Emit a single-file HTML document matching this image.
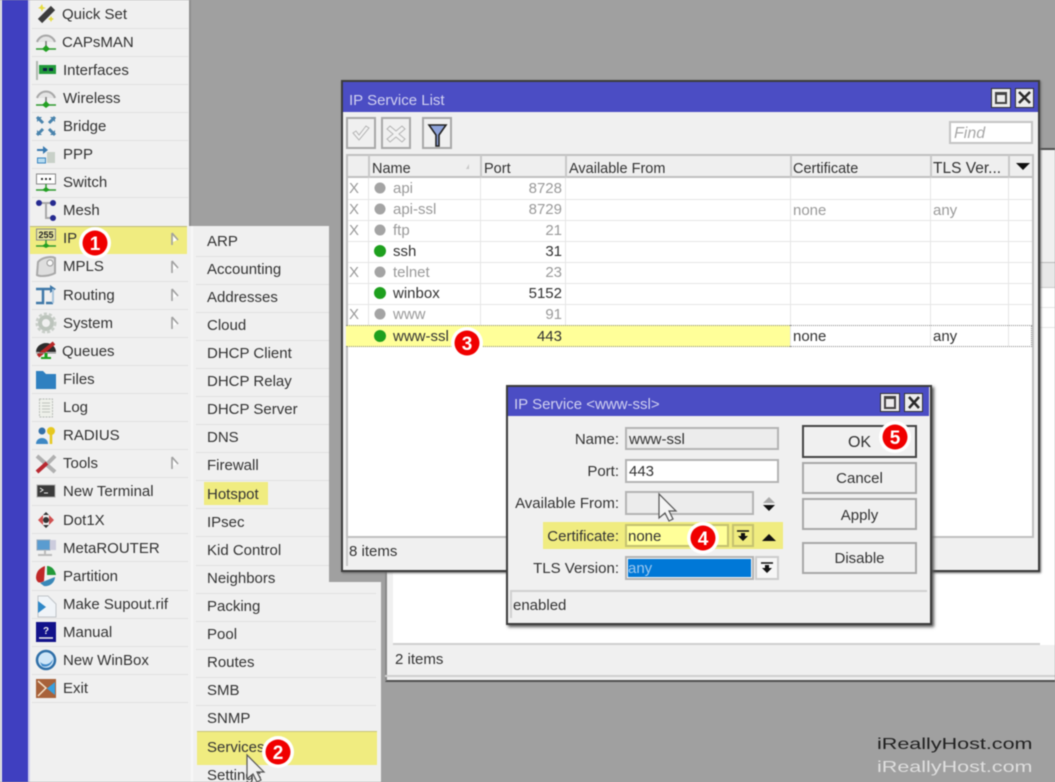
<!DOCTYPE html>
<html><head><meta charset="utf-8"><title>IP Service List</title>
<style>
html,body{margin:0;padding:0;background:#a0a0a0}
#r{position:relative;width:1055px;height:782px;overflow:hidden;background:#a0a0a0;font-family:"Liberation Sans",sans-serif;font-size:15px;color:#333;filter:blur(.55px)}
#r div{position:absolute;box-sizing:border-box}
.t{height:20px;line-height:20px;white-space:nowrap;margin-top:.5px}
.h{margin-top:1.5px;font-size:14.500px}
.g{color:#9a9a9a}
.sep{height:1px;background:#e0e0e0}
.w{background:#f0f0f0}
.bar{background:#4b4dc4;color:#d8d8f4}
.btn{background:#f0f0f0;border:2px solid #a8a8a8;text-align:center;line-height:30px}
.inp{border:2px solid #b4b4b4}
svg{position:absolute;left:0;top:0}
.rl{height:1px;background:#e6e6e6}
.cl{width:1px;background:#e6e6e6}
</style></head><body><div id="r">
<!-- left strip & main menu -->
<div style="left:0;top:0;width:2px;height:782px;background:#e8e8e8"></div>
<div style="left:2px;top:0;width:27px;height:782px;background:#3f3fc0"></div>
<div style="left:28px;top:0;width:2px;height:782px;background:#cfcff0"></div>
<div class="w" style="left:30px;top:0;width:161px;height:782px"></div>
<div style="left:189px;top:0;width:2px;height:226px;background:#8e8e8e"></div>
<div class="sep" style="left:32px;top:28px;width:156px"></div><div class="sep" style="left:32px;top:56px;width:156px"></div><div class="sep" style="left:32px;top:84px;width:156px"></div><div class="sep" style="left:32px;top:112px;width:156px"></div><div class="sep" style="left:32px;top:140px;width:156px"></div><div class="sep" style="left:32px;top:168px;width:156px"></div><div class="sep" style="left:32px;top:197px;width:156px"></div><div class="sep" style="left:32px;top:281px;width:156px"></div><div class="sep" style="left:32px;top:309px;width:156px"></div><div class="sep" style="left:32px;top:337px;width:156px"></div><div class="sep" style="left:32px;top:365px;width:156px"></div><div class="sep" style="left:32px;top:393px;width:156px"></div><div class="sep" style="left:32px;top:421px;width:156px"></div><div class="sep" style="left:32px;top:449px;width:156px"></div><div class="sep" style="left:32px;top:477px;width:156px"></div><div class="sep" style="left:32px;top:505px;width:156px"></div><div class="sep" style="left:32px;top:533px;width:156px"></div><div class="sep" style="left:32px;top:561px;width:156px"></div><div class="sep" style="left:32px;top:590px;width:156px"></div><div class="sep" style="left:32px;top:618px;width:156px"></div><div class="sep" style="left:32px;top:646px;width:156px"></div><div class="sep" style="left:32px;top:674px;width:156px"></div><div class="sep" style="left:32px;top:702px;width:156px"></div>
<div style="left:30px;top:226px;width:157px;height:28px;background:#f0ec80;border-top:1px solid #bdbb78"></div>
<div class="t" style="left:62px;top:4px">Quick Set</div>
<div class="t" style="left:62px;top:32px">CAPsMAN</div>
<div class="t" style="left:63px;top:60px">Interfaces</div>
<div class="t" style="left:63px;top:88px">Wireless</div>
<div class="t" style="left:63px;top:116px">Bridge</div>
<div class="t" style="left:63px;top:144px">PPP</div>
<div class="t" style="left:63px;top:172px">Switch</div>
<div class="t" style="left:63px;top:200px">Mesh</div>
<div class="t" style="left:63px;top:228px">IP</div>
<div class="t" style="left:63px;top:256px">MPLS</div>
<div class="t" style="left:63px;top:285px">Routing</div>
<div class="t" style="left:63px;top:313px">System</div>
<div class="t" style="left:62px;top:341px">Queues</div>
<div class="t" style="left:63px;top:369px">Files</div>
<div class="t" style="left:63px;top:397px">Log</div>
<div class="t" style="left:63px;top:425px">RADIUS</div>
<div class="t" style="left:63px;top:453px">Tools</div>
<div class="t" style="left:63px;top:481px">New Terminal</div>
<div class="t" style="left:63px;top:510px">Dot1X</div>
<div class="t" style="left:63px;top:538px">MetaROUTER</div>
<div class="t" style="left:63px;top:566px">Partition</div>
<div class="t" style="left:63px;top:594px">Make Supout.rif</div>
<div class="t" style="left:63px;top:622px">Manual</div>
<div class="t" style="left:63px;top:650px">New WinBox</div>
<div class="t" style="left:63px;top:678px">Exit</div>
<!-- back window -->
<div class="w" style="left:385px;top:148px;width:670px;height:534px;border-top:2px solid #505050;border-bottom:2px solid #505050;border-left:2px solid #8a8a8a"></div>
<div style="left:393px;top:560px;width:662px;height:85px;background:#fff;border-bottom:2px solid #cfcfcf"></div>
<div style="left:1040px;top:262px;width:15px;height:26px;background:#e8e8e8;border-top:1px solid #bbb;border-bottom:1px solid #ccc"></div>
<div style="left:1040px;top:288px;width:15px;height:357px;background:#fff"></div>
<div class="rl" style="left:1040px;top:307px;width:15px"></div><div class="rl" style="left:1040px;top:327px;width:15px"></div>
<div style="left:385px;top:675px;width:670px;height:2px;background:#cfcfcf"></div>
<div class="t" style="left:395px;top:649px">2 items</div>
<!-- submenu -->
<div class="w" style="left:193px;top:226px;width:136px;height:356px"></div>
<div class="w" style="left:193px;top:582px;width:188px;height:200px"></div>
<div style="left:191px;top:226px;width:2px;height:556px;background:#f8f8f8"></div>
<div style="left:381px;top:582px;width:4px;height:200px;background:#a0a0a0"></div>
<div class="sep" style="left:196px;top:256px;width:133px"></div><div class="sep" style="left:196px;top:284px;width:133px"></div><div class="sep" style="left:196px;top:312px;width:133px"></div><div class="sep" style="left:196px;top:340px;width:133px"></div><div class="sep" style="left:196px;top:368px;width:133px"></div><div class="sep" style="left:196px;top:396px;width:133px"></div><div class="sep" style="left:196px;top:424px;width:133px"></div><div class="sep" style="left:196px;top:452px;width:133px"></div><div class="sep" style="left:196px;top:480px;width:133px"></div><div class="sep" style="left:196px;top:508px;width:133px"></div><div class="sep" style="left:196px;top:536px;width:133px"></div><div class="sep" style="left:196px;top:565px;width:133px"></div><div class="sep" style="left:196px;top:593px;width:180px"></div><div class="sep" style="left:196px;top:621px;width:180px"></div><div class="sep" style="left:196px;top:649px;width:180px"></div><div class="sep" style="left:196px;top:677px;width:180px"></div><div class="sep" style="left:196px;top:705px;width:180px"></div>
<div style="left:204px;top:482px;width:64px;height:23px;background:#f0ec80"></div>
<div style="left:197px;top:731px;width:180px;height:34px;background:#f0ec80;border-top:1px solid #c8c67a"></div>
<div class="t" style="left:207px;top:231px">ARP</div>
<div class="t" style="left:207px;top:259px">Accounting</div>
<div class="t" style="left:207px;top:287px">Addresses</div>
<div class="t" style="left:207px;top:315px">Cloud</div>
<div class="t" style="left:207px;top:343px">DHCP Client</div>
<div class="t" style="left:207px;top:371px">DHCP Relay</div>
<div class="t" style="left:207px;top:399px">DHCP Server</div>
<div class="t" style="left:207px;top:427px">DNS</div>
<div class="t" style="left:207px;top:455px">Firewall</div>
<div class="t" style="left:207px;top:484px">Hotspot</div>
<div class="t" style="left:207px;top:512px">IPsec</div>
<div class="t" style="left:207px;top:540px">Kid Control</div>
<div class="t" style="left:207px;top:568px">Neighbors</div>
<div class="t" style="left:207px;top:596px">Packing</div>
<div class="t" style="left:207px;top:624px">Pool</div>
<div class="t" style="left:207px;top:652px">Routes</div>
<div class="t" style="left:207px;top:680px">SMB</div>
<div class="t" style="left:207px;top:708px">SNMP</div>
<div class="t" style="left:207px;top:737px">Services</div>
<div class="t" style="left:207px;top:765px">Settings</div>
<!-- IP Service List window -->
<div class="w" style="left:341px;top:80px;width:699px;height:492px;border:2px solid #3c3c3c;box-shadow:1px 1px 2px #666"></div>
<div class="bar" style="left:343px;top:82px;width:695px;height:30px"></div>
<div class="t" style="left:349px;top:90px;color:#d0d0f0">IP Service List</div>
<div style="left:991px;top:88px;width:20px;height:20px;background:#ececec;border:1px solid #333"></div>
<div style="left:995px;top:92px;width:12px;height:12px;border:2px solid #444;border-top-width:3px"></div>
<div style="left:1015px;top:88px;width:19px;height:20px;background:#ececec;border:1px solid #333"></div>
<div class="btn" style="left:346px;top:117px;width:30px;height:32px"></div>
<div class="btn" style="left:381px;top:117px;width:30px;height:32px"></div>
<div class="btn" style="left:422px;top:117px;width:30px;height:32px"></div>
<div style="left:949px;top:121px;width:84px;height:23px;background:#fff;border:2px solid #c4c4c4"></div>
<div class="t" style="left:954px;top:123px;font-style:italic;color:#a8a8a8;font-size:16px">Find</div>
<!-- table -->
<div style="left:346px;top:154px;width:688px;height:384px;background:#fff;border:2px solid #c0c0c0"></div>
<div style="left:348px;top:156px;width:684px;height:22px;background:#efefef;border-bottom:2px solid #c0c0c0"></div>
<div class="rl" style="left:348px;top:199px;width:684px"></div><div class="rl" style="left:348px;top:220px;width:684px"></div><div class="rl" style="left:348px;top:241px;width:684px"></div><div class="rl" style="left:348px;top:262px;width:684px"></div><div class="rl" style="left:348px;top:283px;width:684px"></div><div class="rl" style="left:348px;top:304px;width:684px"></div>
<div class="cl" style="left:368px;top:156px;height:190px"></div><div class="cl" style="left:480px;top:156px;height:190px"></div><div class="cl" style="left:565px;top:156px;height:190px"></div><div class="cl" style="left:790px;top:156px;height:190px"></div><div class="cl" style="left:930px;top:156px;height:190px"></div><div class="cl" style="left:1008px;top:156px;height:190px"></div>
<div style="left:368px;top:155px;width:2px;height:23px;background:#c8c8c8"></div><div style="left:480px;top:155px;width:2px;height:23px;background:#c8c8c8"></div><div style="left:565px;top:155px;width:2px;height:23px;background:#c8c8c8"></div><div style="left:790px;top:155px;width:2px;height:23px;background:#c8c8c8"></div><div style="left:930px;top:155px;width:2px;height:23px;background:#c8c8c8"></div><div style="left:1008px;top:155px;width:2px;height:23px;background:#c8c8c8"></div>
<div style="left:346px;top:325px;width:444px;height:22px;background:#ffff99;border-top:1px dotted #888;border-bottom:1px dotted #888"></div>
<div style="left:790px;top:325px;width:242px;height:22px;border:1px dotted #888;border-left:0"></div>
<div class="t h" style="left:372px;top:157px">Name</div>
<div class="t h" style="left:484px;top:157px">Port</div>
<div class="t h" style="left:569px;top:157px">Available From</div>
<div class="t h" style="left:793px;top:157px">Certificate</div>
<div class="t h" style="left:933px;top:157px;font-size:15.500px">TLS Ver...</div>
<div class="t g" style="left:349px;top:178px">X</div><div class="t g" style="left:393px;top:178px">api</div><div class="t g" style="left:482px;width:80px;text-align:right;top:178px">8728</div>
<div class="t g" style="left:349px;top:199px">X</div><div class="t g" style="left:393px;top:199px">api-ssl</div><div class="t g" style="left:482px;width:80px;text-align:right;top:199px">8729</div><div class="t g" style="left:793px;top:200px">none</div><div class="t g" style="left:933px;top:200px">any</div>
<div class="t g" style="left:349px;top:220px">X</div><div class="t g" style="left:393px;top:220px">ftp</div><div class="t g" style="left:482px;width:80px;text-align:right;top:220px">21</div>
<div class="t" style="left:393px;top:241px">ssh</div><div class="t" style="left:482px;width:80px;text-align:right;top:241px">31</div>
<div class="t g" style="left:349px;top:262px">X</div><div class="t g" style="left:393px;top:262px">telnet</div><div class="t g" style="left:482px;width:80px;text-align:right;top:262px">23</div>
<div class="t" style="left:393px;top:283px">winbox</div><div class="t" style="left:482px;width:80px;text-align:right;top:283px">5152</div>
<div class="t g" style="left:349px;top:304px">X</div><div class="t g" style="left:393px;top:304px">www</div><div class="t g" style="left:482px;width:80px;text-align:right;top:304px">91</div>
<div class="t" style="left:393px;top:326px">www-ssl</div><div class="t" style="left:482px;width:80px;text-align:right;top:326px">443</div><div class="t" style="left:793px;top:326px">none</div><div class="t" style="left:933px;top:326px">any</div>
<div style="left:346px;top:538px;width:2px;height:28px;background:#c8c8c8"></div>
<div class="t" style="left:349px;top:541px">8 items</div>
<!-- IP Service dialog -->
<div class="w" style="left:506px;top:385px;width:426px;height:240px;border:2px solid #3c3c3c;box-shadow:2px 2px 3px #555"></div>
<div class="bar" style="left:508px;top:387px;width:421px;height:29px"></div>
<div class="t" style="left:514px;top:394px;color:#d0d0f0">IP Service &lt;www-ssl&gt;</div>
<div style="left:880px;top:393px;width:20px;height:19px;background:#ececec;border:1px solid #333"></div>
<div style="left:884px;top:396px;width:12px;height:13px;border:2px solid #444;border-top-width:3px"></div>
<div style="left:904px;top:393px;width:19px;height:19px;background:#ececec;border:1px solid #333"></div>
<div class="t" style="left:510px;width:109px;text-align:right;top:429px">Name:</div>
<div class="t" style="left:510px;width:109px;text-align:right;top:461px">Port:</div>
<div class="t" style="left:510px;width:109px;text-align:right;top:493px">Available From:</div>
<div style="left:543px;top:522px;width:240px;height:27px;background:#f0ec80"></div>
<div class="t" style="left:510px;width:109px;text-align:right;top:526px">Certificate:</div>
<div class="t" style="left:510px;width:109px;text-align:right;top:558px">TLS Version:</div>
<div class="inp" style="left:625px;top:427px;width:154px;height:23px;background:#ececec"></div>
<div class="t" style="left:629px;top:429px">www-ssl</div>
<div class="inp" style="left:625px;top:459px;width:154px;height:24px;background:#fff"></div>
<div class="t" style="left:629px;top:461px">443</div>
<div class="inp" style="left:625px;top:491px;width:129px;height:24px;background:#ececec"></div>
<div class="inp" style="left:625px;top:524px;width:104px;height:23px;background:#ffff99;border-color:#c4c270"></div>
<div class="t" style="left:628px;top:526px">none</div>
<div class="inp" style="left:732px;top:524px;width:22px;height:23px;background:#f0ec80;border-color:#c4c270"></div>
<div class="inp" style="left:625px;top:556px;width:129px;height:24px;background:#f4f4f4"></div>
<div style="left:628px;top:559px;width:123px;height:18px;background:#0078d7"></div>
<div class="t" style="left:628px;top:558px;color:#9ec8ee">any</div>
<div class="inp" style="left:755px;top:556px;width:24px;height:24px;background:#f6f6f6;border-color:#ccc"></div>
<div class="btn" style="left:802px;top:425px;width:115px;height:33px;border-color:#444;line-height:31px;font-size:16px">OK</div>
<div class="btn" style="left:802px;top:462px;width:115px;height:32px">Cancel</div>
<div class="btn" style="left:802px;top:498px;width:115px;height:32px;line-height:31px">Apply</div>
<div class="btn" style="left:802px;top:542px;width:115px;height:32px">Disable</div>
<div style="left:510px;top:590px;width:417px;height:2px;background:#d0d0d0"></div>
<div style="left:510px;top:592px;width:2px;height:26px;background:#d0d0d0"></div>
<div class="t" style="left:513px;top:595px">enabled</div>
<!-- icons -->
<svg width="1055" height="782" viewBox="0 0 1055 782">
<defs><g id="ant"><path d="M-9 0A9.500 9.500 0 0 1 9 0" fill="#e4e4e4" stroke="#a8a8a8" stroke-width="2"/><path d="M0 -1V7" stroke="#777" stroke-width="1.500"/><path d="M-10 7H10" stroke="#2f9a2f" stroke-width="1.500"/><path d="M-4 7L0 3L4 7L0 10Z" fill="#22a022"/></g>
<g id="sub"><path d="M0 -6V6M0 -6L6 1" stroke="#a0a0a0" stroke-width="1.600" fill="none"/><path d="M1 -3V3L5 1Z" fill="#fff"/></g></defs>
<path d="M40 21L53 8" stroke="#3c3c3c" stroke-width="6"/><path d="M40 7l2 -3 1 3 3 1 -3 1 -1 3 -1 -3 -3 -1zM50 18l1 -2 1 2 2 1 -2 1 -1 2 -1 -2 -2 -1z" fill="#e6dc40"/>
<use href="#ant" x="46" y="42"/>
<path d="M37 61V80" stroke="#b0b8b0" stroke-width="2"/><rect x="39" y="65" width="17" height="9" fill="#219a3a"/><path d="M43 68h4v3h-4zM49 68h4v3h-4z" fill="#124"/>
<use href="#ant" x="46" y="98"/>
<path d="M37 117l6 6M55 117l-6 6M37 135l6 -6M55 135l-6 -6" stroke="#4a84ad" stroke-width="3"/><path d="M37 117h5l-5 5zM55 117h-5l5 5zM37 135h5l-5 -5zM55 135h-5l5 -5z" fill="#4a84ad"/>
<path d="M37 150h7" stroke="#3a7ab0" stroke-width="2"/><path d="M43 146l5 4 -5 4z" fill="#3a7ab0"/><rect x="37.500" y="158" width="8" height="5" fill="#b8dcf0" stroke="#3a85c0"/><rect x="47" y="152" width="8" height="11" fill="#c8d0c8"/>
<rect x="36.500" y="174" width="19" height="10" fill="#fff" stroke="#888"/><path d="M41 179h2M45 179h2M49 179h2" stroke="#333" stroke-width="2"/><path d="M46 184v6M36 190h20" stroke="#2f9a2f" stroke-width="1.500"/><path d="M42 190l4 -3 4 3 -4 2z" fill="#22a022"/>
<path d="M38 203H53M46 203V218H53" stroke="#a8a8a8" stroke-width="2" fill="none"/><circle cx="39" cy="203" r="3" fill="#252a90"/><circle cx="53" cy="203" r="3" fill="#252a90"/><circle cx="53" cy="218" r="3" fill="#252a90"/>
<rect x="36.500" y="229" width="19" height="11" fill="#e8e6a0" stroke="#888"/><text x="46" y="238" font-family="Liberation Sans" font-size="9" font-weight="700" text-anchor="middle" fill="#222">255</text><path d="M46 240v6M36 246h20" stroke="#2f9a2f" stroke-width="1.500"/><path d="M42 246l4 -3 4 3 -4 2z" fill="#22a022"/>
<use href="#sub" x="172" y="239"/><use href="#sub" x="172" y="267"/><use href="#sub" x="172" y="295"/><use href="#sub" x="172" y="323"/><use href="#sub" x="172" y="463"/>
<path d="M38 262C42 257 52 256 55 258V273C50 276 40 277 37 275Z" fill="#dedede" stroke="#a8a8a8" stroke-width="2"/><ellipse cx="50" cy="263" rx="3" ry="3" fill="#f8f8f8" stroke="#999"/>
<path d="M36 289H43V303H36M43 289H52M46 303H53" stroke="#3f78a8" stroke-width="2.500" fill="none"/><path d="M50 285L56 289L50 293Z" fill="#3f78a8"/><path d="M53 289V303" stroke="#a8c4dc" stroke-width="2"/>
<circle cx="46" cy="323" r="6" fill="none" stroke="#bcc4bc" stroke-width="4"/><circle cx="46" cy="323" r="9" fill="none" stroke="#c8cec8" stroke-width="3" stroke-dasharray="3 2"/>
<path d="M36 352A10 9 0 0 1 56 352Z" fill="#2c2c2c"/><path d="M38 356L54 343" stroke="#b82828" stroke-width="4"/><path d="M36 353H56" stroke="#888" stroke-width="1"/><path d="M46 353v6" stroke="#1ea01e" stroke-width="3"/><path d="M41 358h10" stroke="#1ea01e" stroke-width="2"/>
<path d="M36 371H43L46 374H56V389H36Z" fill="#2f80c0"/>
<rect x="39.500" y="399" width="13" height="18" fill="#eef0ea" stroke="#b8bcb8" stroke-dasharray="2 1"/><path d="M42 403h8M42 406h8M42 409h8M42 412h8" stroke="#c0c4c0"/>
<circle cx="42" cy="431" r="3.500" fill="#3470a8"/><path d="M36 444C36 436 48 436 48 444Z" fill="#3e88c4"/><circle cx="51" cy="431" r="4" fill="#e6c820"/><path d="M51 434V444" stroke="#e6c820" stroke-width="2.500"/>
<path d="M37 456L55 472" stroke="#b0b0b0" stroke-width="4"/><path d="M55 456L47 464" stroke="#b0b0b0" stroke-width="4"/><path d="M37 472L47 463" stroke="#b82830" stroke-width="4"/>
<rect x="37" y="485" width="18" height="12" fill="#3a3a3a" stroke="#aaa"/><path d="M40 488l3 2 -3 2M44 493h4" stroke="#eee" fill="none"/>
<path d="M38 520l5 -5v10zM54 520l-5 -5v10z" fill="#d05050"/><circle cx="46" cy="520" r="3" fill="#333"/><path d="M46 512l-3 3h6zM46 528l-3 -3h6z" fill="#333"/>
<rect x="37" y="540" width="13" height="10" fill="#5a9cd0" stroke="#9ab"/><rect x="50" y="540" width="6" height="10" fill="#ccd" /><path d="M38 555H52M45 550V555" stroke="#bbb" stroke-width="2"/>
<path d="M36 578C36 571 40 568 45 566L44 581C41 583 37 584 36 578Z" fill="#c02828"/><path d="M47 566C52 566 55 570 56 575H47Z" fill="#229a3a"/><path d="M40 583L55 577C55 582 50 587 44 586Z" fill="#3a88b8"/>
<path d="M38 596H48L56 604V617H38Z" fill="#f0f4f8" stroke="#c0c4c8"/><path d="M38 601L46 607L38 613Z" fill="#2f88c8"/>
<rect x="36" y="622" width="20" height="20" fill="#12128a"/><text x="46" y="634" font-family="Liberation Sans" font-size="10" font-weight="700" text-anchor="middle" fill="#eee">?</text><path d="M39 638H53" stroke="#eee" stroke-width="1.500"/>
<circle cx="46" cy="660" r="9" fill="#cfe6f8" stroke="#2f6fa8" stroke-width="2.500"/><path d="M40 662C44 666 50 665 53 659C52 665 47 668 42 666Z" fill="#3f88c8"/>
<rect x="36" y="679" width="20" height="19" fill="#a8623a"/><path d="M38 681L46 688L38 696" stroke="#f4e0c8" fill="none" stroke-width="1.500"/><path d="M55 682V695L47 688.500Z" fill="#38a0e0"/>
<!-- toolbar -->
<path d="M353 133L359 140L369 128L366 126L359 135L356 131Z" fill="#f2f2f2" stroke="#b4b4b4"/>
<path d="M390 126L396 131L402 126L405 129L399 134L405 139L402 142L396 137L390 142L387 139L393 134L387 129Z" fill="#f2f2f2" stroke="#b4b4b4"/>
<path d="M429 125H446L439 135V146L436 146V135Z" fill="#8fa4dc" stroke="#222" stroke-width="1.600"/>
<path d="M1019 92L1030 103M1030 92L1019 103" stroke="#2a2a2a" stroke-width="2.500"/>
<path d="M909 397L919 408M919 397L909 408" stroke="#2a2a2a" stroke-width="2.500"/>
<path d="M466 169l3 -5v5z" fill="#c8c8c8"/>
<path d="M1016 163H1030L1023 170Z" fill="#111"/>
<!-- status dots -->
<circle cx="380" cy="188" r="5.500" fill="#a4a4a4"/><circle cx="380" cy="209" r="5.500" fill="#a4a4a4"/><circle cx="380" cy="230" r="5.500" fill="#a4a4a4"/><circle cx="380" cy="251" r="6" fill="#1ea01e"/><circle cx="380" cy="272" r="5.500" fill="#a4a4a4"/><circle cx="380" cy="293" r="6" fill="#1ea01e"/><circle cx="380" cy="314" r="5.500" fill="#a4a4a4"/><circle cx="380" cy="336" r="6" fill="#1ea01e"/>
<!-- dialog arrows -->
<path d="M769 497L775 503H763Z" fill="#aaa"/><path d="M763 505H775L769 511Z" fill="#111"/>
<path d="M762 541H776L769 534Z" fill="#111"/>
<path d="M737 531H749" stroke="#111" stroke-width="1.500"/><path d="M741 533H745V536H748L743 541L738 536H741Z" fill="#111"/>
<path d="M761 563H773" stroke="#111" stroke-width="1.500"/><path d="M765 565H769V568H772L767 573L762 568H765Z" fill="#111"/>
<!-- cursors -->
<path d="M659 494V518L665 513L669 521L673 519L669 511H676Z" fill="#f4f4f4" stroke="#555" stroke-width="1.200"/>
<path d="M247 755V779L253 774L257 782L261 780L257 772H264Z" fill="#f0f0f0" stroke="#555" stroke-width="1.200"/>
<!-- badges -->
<g font-family="Liberation Sans" font-size="19" font-weight="700" text-anchor="middle">
<circle cx="95" cy="243" r="16" fill="#fff"/><circle cx="95" cy="243" r="12.500" fill="#f00000"/><text x="95" y="250" fill="#fff">1</text>
<circle cx="278" cy="752" r="16" fill="#fff"/><circle cx="278" cy="752" r="12.500" fill="#f00000"/><text x="278" y="759" fill="#fff">2</text>
<circle cx="467" cy="343" r="16" fill="#fff"/><circle cx="467" cy="343" r="12.500" fill="#f00000"/><text x="467" y="350" fill="#fff">3</text>
<circle cx="703" cy="538" r="16" fill="#fff"/><circle cx="703" cy="538" r="12.500" fill="#f00000"/><text x="703" y="545" fill="#fff">4</text>
<circle cx="895" cy="437" r="16" fill="#fff"/><circle cx="895" cy="437" r="12.500" fill="#f00000"/><text x="895" y="444" fill="#fff">5</text>
</g>
</svg>
<!-- watermark -->
<div class="t" style="left:877px;top:734px;font-size:16px;color:#222;transform:scaleX(1.345);transform-origin:left center">iReallyHost.com</div>
<div class="t" style="left:877px;top:757px;font-size:16px;color:#dedede;transform:scaleX(1.345);transform-origin:left center">iReallyHost.com</div>
</div></body></html>
